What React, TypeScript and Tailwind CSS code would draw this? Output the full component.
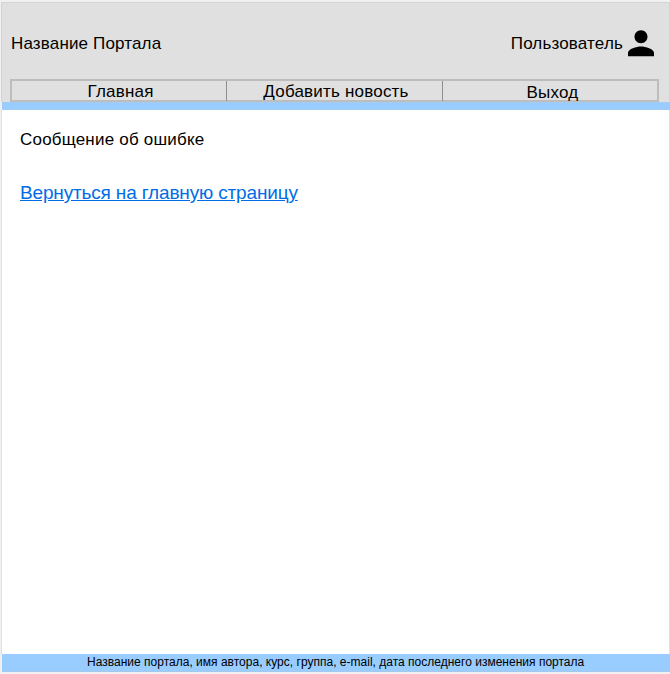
export default function App() {
  return (
    <div className="flex h-[674px] w-[670px] flex-col overflow-hidden bg-[#f0f0f0] pl-px pt-[2px] font-['Liberation_Sans',Arial,sans-serif] text-black">
      <header className="h-[100px] border-x border-t border-[#d4d4d4] bg-[#e0e0e0] pl-2 pr-[10px]">
        <div className="flex h-[76px] items-center justify-between">
          <h1 className="pl-px pt-1.5 text-[17px] leading-6 tracking-[0.15px]">Название Портала</h1>
          <div className="flex items-center">
            <span className="pt-1.5 text-[17px] leading-6 tracking-[0.16px]">Пользователь</span>
            <svg className="mt-1 h-[40px] w-[36px]" viewBox="0 0 36 40">
              <path transform="translate(-1.5 .7) scale(1.625)" d="M12 12c2.21 0 4-1.79 4-4s-1.79-4-4-4-4 1.79-4 4 1.79 4 4 4zm0 2c-2.67 0-8 1.34-8 4v2h16v-2c0-2.66-5.33-4-8-4z" />
            </svg>
          </div>
        </div>
        <nav className="grid h-[23px] w-[649px] grid-cols-[215px_216px_214px] border-2 border-[#bdbdbd] text-center text-[17px] leading-[22px] tracking-[0.2px]">
          <a className="h-[20px] border-r border-[#8e8e8e] pl-[3px]">Главная</a>
          <a className="h-[20px] border-r border-[#8e8e8e] pl-[3px]">Добавить новость</a>
          <a className="h-[20px] pl-[5px] pt-px">Выход</a>
        </nav>
      </header>
      <div className="ml-px h-2 border-y border-[#a4cbf1] bg-[#99ccff]" />
      <main className="flex-1 border-x border-[#e0e0e0] bg-white pl-[18px] pt-[18px]">
        <p className="text-[17px] leading-6 tracking-[0.2px]">Сообщение об ошибке</p>
        <a className="mt-[29px] block text-[19px] leading-6 tracking-[-0.16px] text-[#006de6] underline">Вернуться на главную страницу</a>
      </main>
      <footer className="mb-[2px] ml-px h-[18px] border-b border-[#a4c8ec] bg-[#99ccff] pl-[85px] text-[12px] leading-4 tracking-[0.01px]">Название портала, имя автора, курс, группа, e-mail, дата последнего изменения портала</footer>
    </div>
  );
}
